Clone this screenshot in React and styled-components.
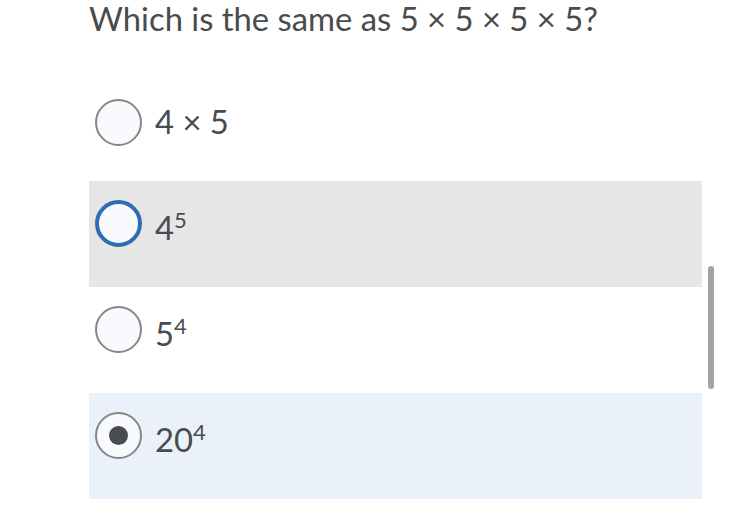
import React from "react";
import styled, { createGlobalStyle, css } from "styled-components";

const Global = createGlobalStyle`
  html, body { margin: 0; padding: 0; background: #ffffff; }
  body { font-family: Lato, "Noto Sans", sans-serif; color: #494c4e; }
`;

const Page = styled.div`
  position: relative;
  width: 750px;
  height: 526px;
  overflow: hidden;
  background: #fff;
`;

const Content = styled.div`
  padding-left: 89px;
  width: 613px;
`;

const Question = styled.div`
  font-size: 32.8px;
  line-height: 38px;
  height: 80px;
  white-space: nowrap;
`;

const Options = styled.div`
  display: flex;
  flex-direction: column;
`;

const Row = styled.div`
  display: flex;
  align-items: flex-start;
  gap: 13px;
  box-sizing: border-box;
  height: ${(p) => (p.$first ? "101px" : "106px")};
  padding: 19px 0 0 6px;
  background: ${(p) =>
    p.$tone === "hover" ? "#e6e6e6" : p.$tone === "selected" ? "#eaf1fa" : "transparent"};
`;

const Radio = styled.div`
  box-sizing: border-box;
  width: 47px;
  height: 47px;
  flex: none;
  border-radius: 50%;
  background: #f9fafd;
  border: 2px solid #868686;
  display: flex;
  align-items: center;
  justify-content: center;
  ${(p) =>
    p.$focus &&
    css`
      border: 4px solid #2f6db1;
    `}
`;

const Dot = styled.div`
  width: 19px;
  height: 19px;
  border-radius: 50%;
  background: #494c4e;
`;

const Label = styled.div`
  font-size: 32.8px;
  line-height: 45px;
  white-space: nowrap;
  padding-top: ${(p) => (p.$raised ? "5px" : "0")};
`;

const Sup = styled.sup`
  font-size: 22px;
  vertical-align: 12px;
  line-height: 0;
`;

const ScrollThumb = styled.div`
  position: absolute;
  left: 708px;
  top: 266px;
  width: 6px;
  height: 123px;
  border-radius: 3px;
  background: #a3a3a3;
`;

const options = [
  { base: "4 × 5", sup: null, tone: "none" },
  { base: "4", sup: "5", tone: "hover", focus: true },
  { base: "5", sup: "4", tone: "none" },
  { base: "20", sup: "4", tone: "selected", checked: true },
];

export default function App() {
  return (
    <Page>
      <Global />
      <Content>
        <Question>Which is the same as 5 × 5 × 5 × 5?</Question>
        <Options>
          {options.map((o, i) => (
            <Row key={i} $tone={o.tone} $first={i === 0}>
              <Radio $focus={o.focus}>{o.checked && <Dot />}</Radio>
              <Label $raised={!!o.sup}>
                {o.base}
                {o.sup && <Sup>{o.sup}</Sup>}
              </Label>
            </Row>
          ))}
        </Options>
      </Content>
      <ScrollThumb />
    </Page>
  );
}
